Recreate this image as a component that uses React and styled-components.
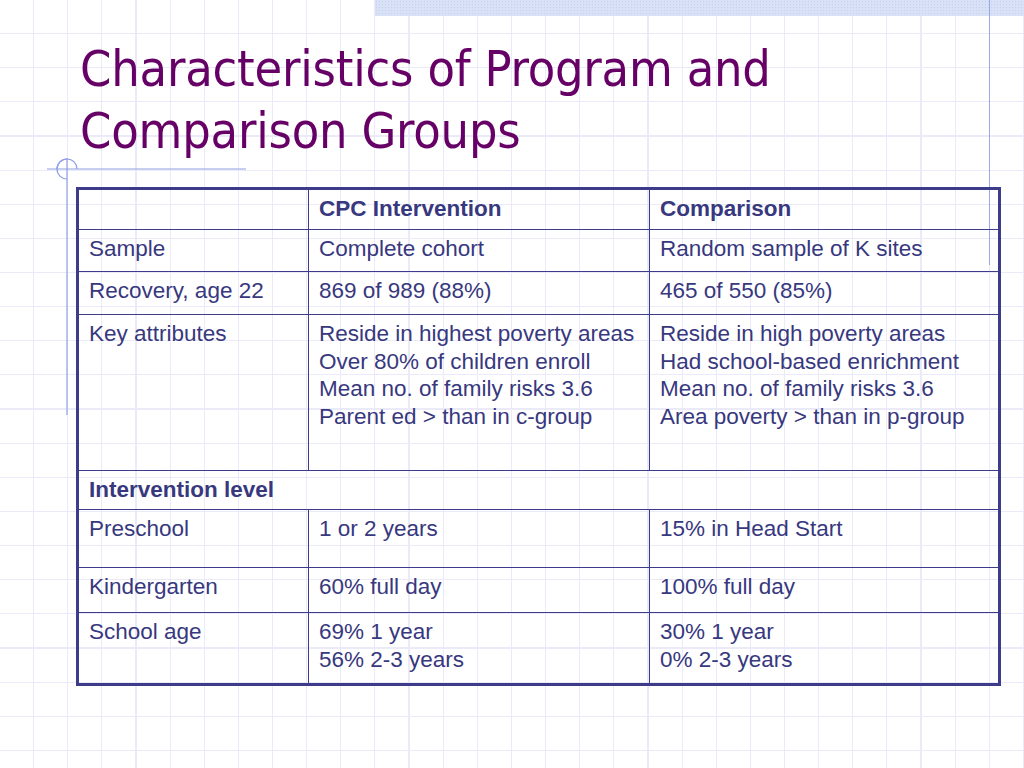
import React from 'react'
import styled, { createGlobalStyle } from 'styled-components';

const GlobalStyle = createGlobalStyle`
    html, body {
        margin: 0;
        padding: 0;
        background: #ffffff;
    }
`

const rows = [
    { label: 'Sample', cpc: ['Complete cohort'], comp: ['Random sample of K sites'], h: 42 },
    { label: 'Recovery, age 22', cpc: ['869 of 989 (88%)'], comp: ['465 of 550 (85%)'], h: 43 },
    {
        label: 'Key attributes',
        cpc: ['Reside in highest poverty areas', 'Over 80% of children enroll', 'Mean no. of family risks 3.6', 'Parent ed > than in c-group'],
        comp: ['Reside in high poverty areas', 'Had school-based enrichment', 'Mean no. of family risks 3.6', 'Area poverty > than in p-group'],
        h: 156,
    },
]

const levelRows = [
    { label: 'Preschool', cpc: ['1 or 2 years'], comp: ['15% in Head Start'], h: 58 },
    { label: 'Kindergarten', cpc: ['60% full day'], comp: ['100% full day'], h: 45 },
    { label: 'School age', cpc: ['69% 1 year', '56% 2-3 years'], comp: ['30% 1 year', '0% 2-3 years'], h: 72 },
]

function Lines({ items }) {
    return items.map((line, i) => <div key={i}>{line}</div>)
}

function DataRow({ row }) {
    return (
        <Row $h={row.h}>
            <Cell>{row.label}</Cell>
            <Cell><Lines items={row.cpc} /></Cell>
            <Cell><Lines items={row.comp} /></Cell>
        </Row>
    )
}

function App() {
    return (
        <Slide>
            <GlobalStyle />
            <TopBand />
            <RightRule />
            <CrossHair>
                <svg width="220" height="270" viewBox="0 0 220 270">
                    <line x1="0" y1="11" x2="199" y2="11" stroke="#8f9fe3" strokeWidth="1.2" />
                    <line x1="20" y1="0" x2="20" y2="257" stroke="#8f9fe3" strokeWidth="1.2" />
                    <path d="M20 21 A10 10 0 1 1 30 11" fill="none" stroke="#8f9fe3" strokeWidth="1.2" />
                    <path d="M10 11 A10 10 0 0 1 20 1" fill="none" stroke="#8f9fe3" strokeWidth="1.2" />
                </svg>
            </CrossHair>
            <Title>
                Characteristics of Program and<br />
                Comparison Groups
            </Title>
            <Table>
                <colgroup>
                    <col style={{ width: 231 }} />
                    <col style={{ width: 341 }} />
                    <col style={{ width: 350 }} />
                </colgroup>
                <tbody>
                    <Row $h={41}>
                        <Cell></Cell>
                        <Cell $bold>CPC Intervention</Cell>
                        <Cell $bold>Comparison</Cell>
                    </Row>
                    {rows.map((r) => <DataRow key={r.label} row={r} />)}
                    <Row $h={39}>
                        <Cell $bold colSpan={3}>Intervention level</Cell>
                    </Row>
                    {levelRows.map((r) => <DataRow key={r.label} row={r} />)}
                </tbody>
            </Table>
        </Slide>
    )
}

const Slide = styled.div`
    position: relative;
    width: 1024px;
    height: 768px;
    overflow: hidden;
    box-sizing: border-box;
    padding: 38px 0 0 76px;
    background-color: #ffffff;
    background-image:
        repeating-linear-gradient(to right, transparent 0 33px, #eaeaf8 33px 34.133px),
        repeating-linear-gradient(to bottom, transparent 0 33px, #eaeaf8 33px 34.133px);
`

const TopBand = styled.div`
    position: absolute;
    top: 0;
    left: 375px;
    right: 0;
    height: 16px;
    background-color: #d9e1f7;
    background-image: radial-gradient(#c5d0f0 0.8px, transparent 1px);
    background-size: 3px 3px;
`

const RightRule = styled.div`
    position: absolute;
    top: 0;
    left: 989px;
    width: 1px;
    height: 265px;
    background: #9aa9e6;
`

const CrossHair = styled.div`
    position: absolute;
    left: 47px;
    top: 158px;
    line-height: 0;
`

const Title = styled.h1`
    position: relative;
    margin: 0 0 25px 4px;
    font-family: "DejaVu Sans Condensed", "DejaVu Sans", sans-serif;
    font-weight: normal;
    font-size: 50px;
    letter-spacing: -0.2px;
    line-height: 62px;
    color: #660066;
`

const Table = styled.table`
    position: relative;
    border-collapse: collapse;
    table-layout: fixed;
    width: 922px;
    border: 3px solid #3c3c8a;
    font-family: "Liberation Sans", Arial, sans-serif;
    font-size: 22.5px;
    line-height: 27.5px;
    color: #38387e;
`

const Row = styled.tr`
    height: ${(p) => p.$h}px;
`

const Cell = styled.td`
    border: 1.5px solid #3c3c8a;
    vertical-align: top;
    padding: 5px 10px 0;
    font-weight: ${(p) => (p.$bold ? 'bold' : 'normal')};
    white-space: nowrap;
`

export default App
